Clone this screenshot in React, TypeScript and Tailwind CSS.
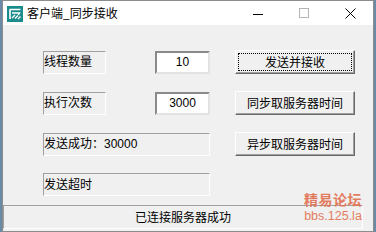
import React from "react";

const cjk = { fontFamily: '"Noto Sans CJK SC", "Liberation Sans", sans-serif' };
const mixed = { fontFamily: '"Liberation Sans", "Noto Sans CJK SC", sans-serif' };

const Sunken = ({ width, children }: { width: string; children: React.ReactNode }) => (
  <div
    className={`${width} h-[23px] flex items-center border border-t-[#a0a0a0] border-l-[#a0a0a0] border-b-white border-r-white text-[12px] text-black leading-none`}
    style={mixed}
  >
    {children}
  </div>
);

const Field = ({ value }: { value: string }) => (
  <div className="w-[55px] h-[23px] border-2 border-t-[#8a8a8a] border-l-[#8a8a8a] border-b-[#e3e3e3] border-r-[#e3e3e3] bg-white flex items-center justify-center text-[12px] text-black" style={mixed}>
    {value}
  </div>
);

const Btn = ({ label, focused }: { label: string; focused?: boolean }) => (
  <div className="w-[120px] h-[24px] bg-[#f0f0f0] border border-t-white border-l-white border-b-[#696969] border-r-[#696969] shadow-[inset_-1px_-1px_0_#a0a0a0] flex items-center justify-center p-[2px]">
    <div
      className={`w-full h-full flex items-center justify-center text-[12px] text-black ${focused ? "border border-dotted border-black" : ""}`}
      style={cjk}
    >
      {label}
    </div>
  </div>
);

const AppIcon = () => (
  <svg width="16" height="16" viewBox="0 0 16 16">
    <rect x="0" y="0" width="16" height="16" fill="#1b8c8c" />
    <path d="M2.5 3.5h11M3 3.5v9.5" stroke="#fff" strokeWidth="1.6" fill="none" />
    <path d="M5 7h7.5l-1 2" stroke="#fff" strokeWidth="1.4" fill="none" />
    <path d="M5 12l3-3M8 12.5l3-3M11 13l2.5-2.5" stroke="#fff" strokeWidth="1.4" fill="none" />
  </svg>
);

export default function App() {
  return (
    <div className="w-[376px] h-[232px] bg-[#6b8aa8] flex overflow-hidden relative">
      <div className="ml-[2px] w-[372px] h-[232px] flex flex-col bg-[#f0f0f0] border border-[#8c8c8c]">
        <div className="h-[24px] bg-white flex items-center shrink-0">
          <div className="ml-[4px] mt-[1px]">
            <AppIcon />
          </div>
          <span className="ml-[4px] text-[12px] text-black" style={cjk}>
            客户端_同步接收
          </span>
          <div className="ml-auto flex items-center h-full">
            <div className="w-[46px] h-full flex items-center justify-center">
              <div className="w-[10px] h-px bg-black mt-[2px]" />
            </div>
            <div className="w-[46px] h-full flex items-center justify-center">
              <div className="w-[10px] h-[10px] border border-[#b4b4b4]" />
            </div>
            <div className="w-[46px] h-full flex items-center justify-center">
              <svg width="11" height="11" viewBox="0 0 11 11">
                <path d="M0.5 0.5l10 10M10.5 0.5l-10 10" stroke="#000" strokeWidth="1" />
              </svg>
            </div>
          </div>
        </div>

        <div className="flex flex-col pl-[40px] pt-[25px] gap-[17px]">
          <div className="flex items-center">
            <Sunken width="w-[63px]">线程数量</Sunken>
            <div className="ml-[49px]">
              <Field value="10" />
            </div>
            <div className="ml-[25px]">
              <Btn label="发送并接收" focused />
            </div>
          </div>
          <div className="flex items-center">
            <Sunken width="w-[63px]">执行次数</Sunken>
            <div className="ml-[49px]">
              <Field value="3000" />
            </div>
            <div className="ml-[25px]">
              <Btn label="同步取服务器时间" />
            </div>
          </div>
          <div className="flex items-center">
            <Sunken width="w-[167px]">发送成功：30000</Sunken>
            <div className="ml-[25px]">
              <Btn label="异步取服务器时间" />
            </div>
          </div>
          <div className="flex items-center">
            <Sunken width="w-[167px]">发送超时</Sunken>
          </div>
        </div>

        <div
          className="mt-[9px] w-[360px] h-[24px] border border-t-[#a0a0a0] border-l-[#a0a0a0] border-b-white border-r-white flex items-center justify-center text-[12px] text-black"
          style={cjk}
        >
          已连接服务器成功
        </div>
      </div>

      <div className="absolute left-[304px] top-[191px] flex flex-col items-center text-[#e2704f] opacity-90 pointer-events-none">
        <span className="text-[14px] font-bold leading-[16px] tracking-[0.5px]" style={cjk}>
          精易论坛
        </span>
        <span className="text-[12.5px] leading-[14px] mt-[2px]" style={mixed}>
          bbs.125.la
        </span>
      </div>
    </div>
  );
}
